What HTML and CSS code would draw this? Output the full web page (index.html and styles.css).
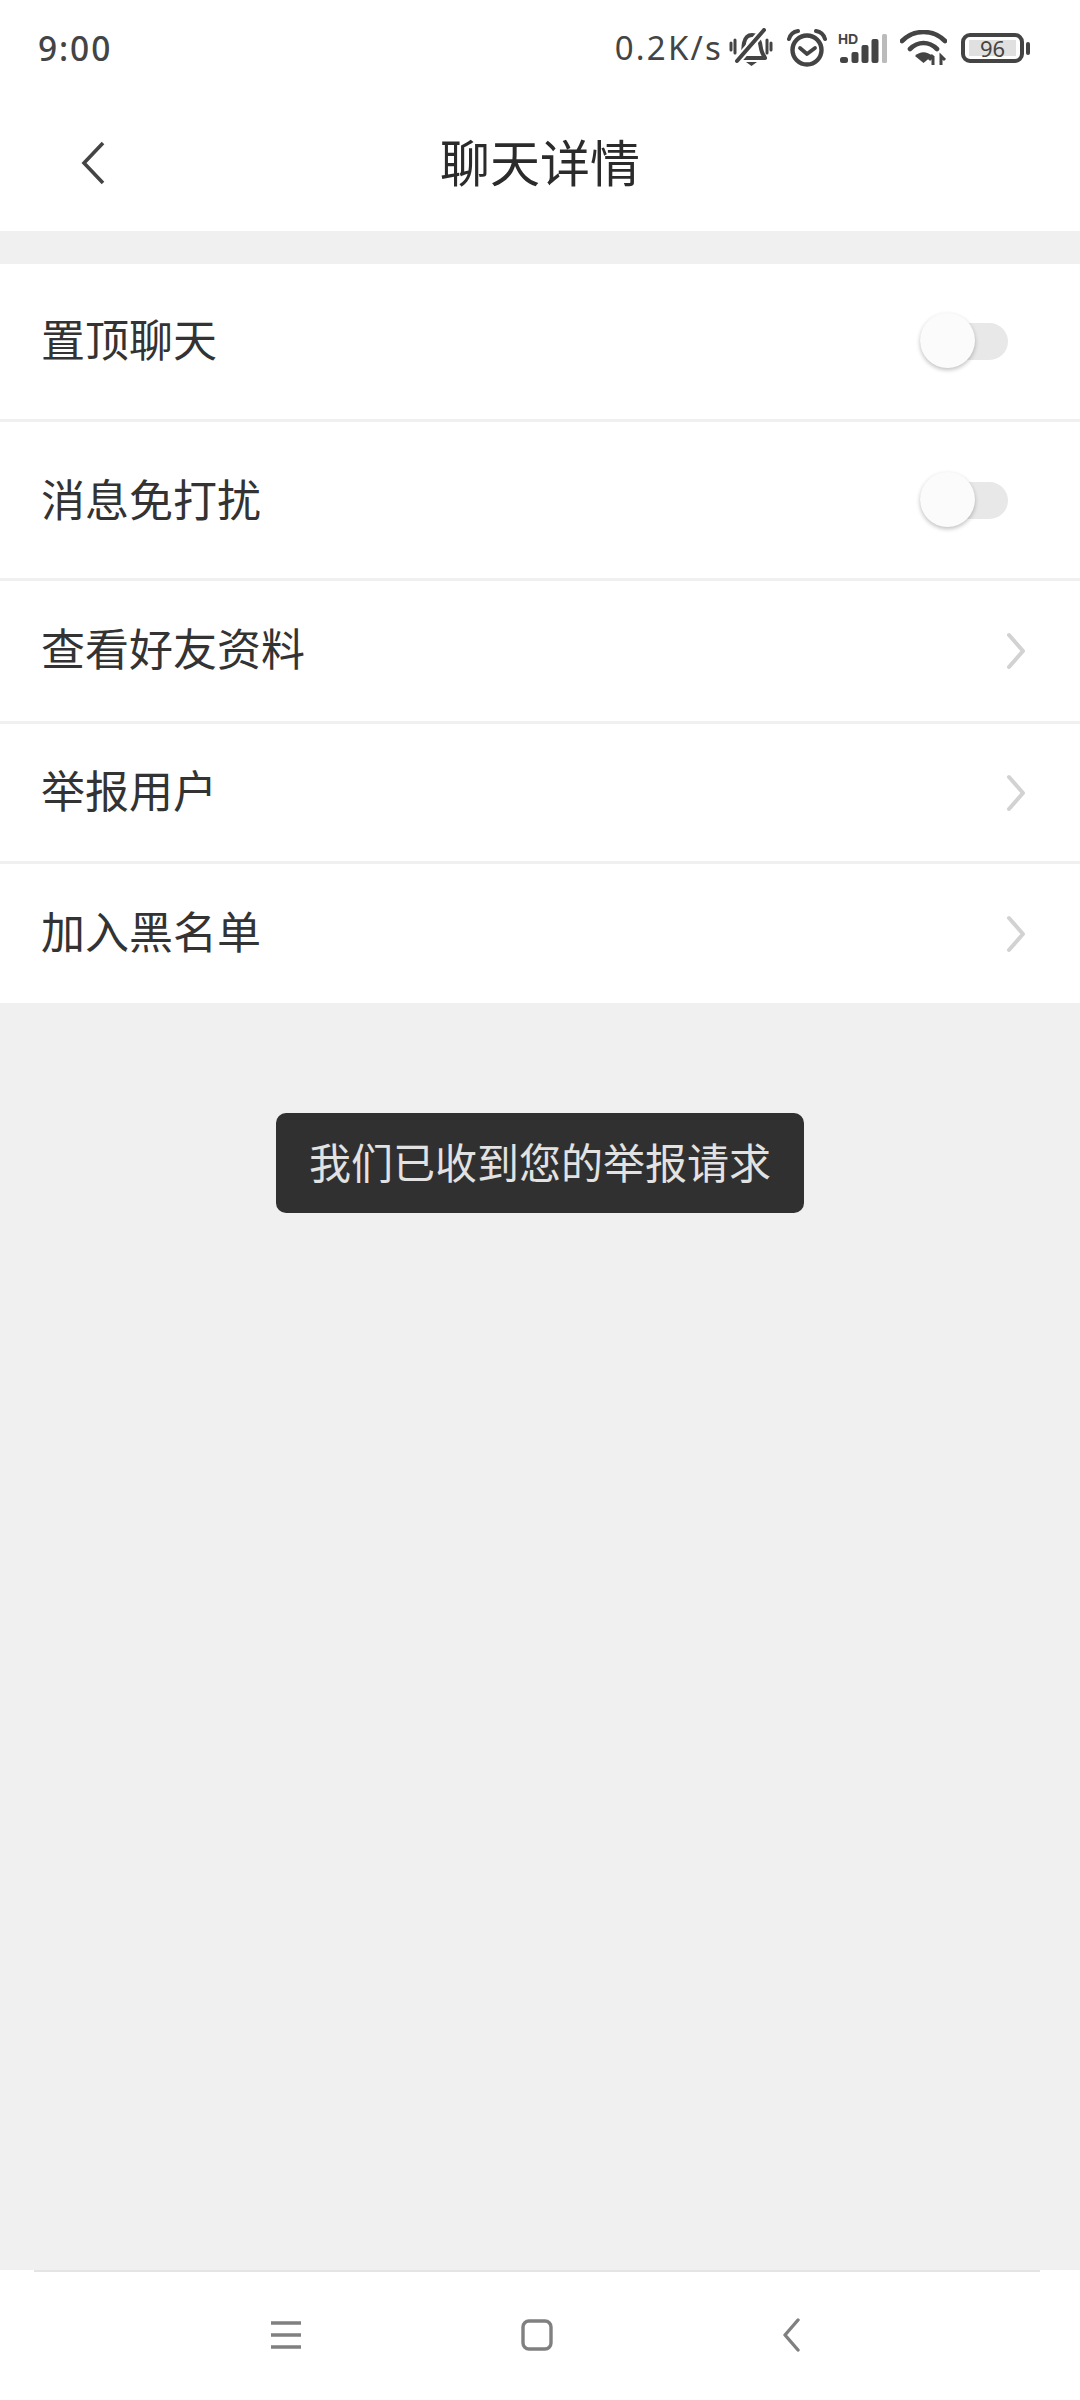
FILE: index.html
```html
<!DOCTYPE html>
<html lang="zh-CN">
<head>
<meta charset="utf-8">
<title>聊天详情</title>
<link rel="stylesheet" href="styles.css">
</head>
<body>
<div class="screen">
  <header class="top">
    <div class="status">
      <span class="time">9:00</span>
      <div class="status-right">
        <span class="speed">0.2K/s</span>
        <svg class="ic-bell" width="44" height="40" viewBox="0 0 44 40">
          <path d="M12 28c3-3 2-8 3-13 1-5 4-8 8-8s7 3 8 8c1 5 1 9 4 13l1 2H9z" fill="none" stroke="#444" stroke-width="4" stroke-linejoin="round"/>
          <path d="M17 34h11l-5.500 4z" fill="#444"/>
          <path d="M35 2 8 33" stroke="#fff" stroke-width="8"/>
          <path d="M35 2 8 33" stroke="#444" stroke-width="4" stroke-linecap="round"/>
          <path d="M2 15v7M6 12v13M38 12v13M42 15v7" stroke="#444" stroke-width="3" stroke-linecap="round"/>
        </svg>
        <svg class="ic-alarm" width="40" height="38" viewBox="0 0 40 38">
          <circle cx="20" cy="21" r="14.500" fill="none" stroke="#444" stroke-width="4.400"/>
          <path d="M13 19l7 6 8-6" fill="none" stroke="#444" stroke-width="3.800" stroke-linecap="round" stroke-linejoin="round"/>
          <path d="M2 10Q4 3 11 2M38 10Q36 3 29 2" fill="none" stroke="#444" stroke-width="4" stroke-linecap="round"/>
        </svg>
        <div class="signal">
          <span class="hd">HD</span>
          <svg width="50" height="32" viewBox="0 0 50 32">
            <rect x="2" y="25" width="8" height="6" rx="2.500" fill="#444"/>
            <rect x="13.500" y="20" width="7" height="11" rx="2" fill="#444"/>
            <rect x="23.500" y="13" width="7" height="18" rx="2" fill="#444"/>
            <rect x="33.500" y="7" width="7" height="24" rx="2" fill="#444"/>
            <rect x="44" y="2" width="5" height="29" rx="1.500" fill="#bbb"/>
          </svg>
        </div>
        <svg class="ic-wifi" width="47" height="36" viewBox="0 0 47 36">
          <path d="M2 11C14 -1 33 -1 45 11M10 19C18 11 29 11 37 19" fill="none" stroke="#444" stroke-width="4.600" stroke-linecap="round"/>
          <path d="M15 26c5-5 12-5 17 0l-8.500 7z" fill="#444"/>
          <path d="M33 26v9M29 30l4-5M41 35v-9l4 4" fill="none" stroke="#444" stroke-width="3"/>
        </svg>
        <div class="battery">
          <div class="battery-body"><span class="battery-fill">96</span></div>
          <span class="battery-nub"></span>
        </div>
      </div>
    </div>
    <div class="titlebar">
      <svg class="back" width="24" height="44" viewBox="0 0 24 44">
        <path d="M22 2 3 22l19 20" fill="none" stroke="#444" stroke-width="3.600"/>
      </svg>
      <h1 class="title">聊天详情</h1>
    </div>
  </header>

  <main class="content">
    <ul class="list">
      <li class="row row-1">
        <span class="label">置顶聊天</span>
        <span class="switch"><span class="thumb"></span></span>
      </li>
      <li class="row row-2">
        <span class="label">消息免打扰</span>
        <span class="switch"><span class="thumb"></span></span>
      </li>
      <li class="row row-3">
        <span class="label">查看好友资料</span>
        <svg class="chev" width="20" height="38" viewBox="0 0 20 38"><path d="M3 3l14 16L3 35" fill="none" stroke="#d2d2d2" stroke-width="4" stroke-linecap="round" stroke-linejoin="round"/></svg>
      </li>
      <li class="row row-4">
        <span class="label">举报用户</span>
        <svg class="chev" width="20" height="38" viewBox="0 0 20 38"><path d="M3 3l14 16L3 35" fill="none" stroke="#d2d2d2" stroke-width="4" stroke-linecap="round" stroke-linejoin="round"/></svg>
      </li>
      <li class="row row-5">
        <span class="label">加入黑名单</span>
        <svg class="chev" width="20" height="38" viewBox="0 0 20 38"><path d="M3 3l14 16L3 35" fill="none" stroke="#d2d2d2" stroke-width="4" stroke-linecap="round" stroke-linejoin="round"/></svg>
      </li>
    </ul>
    <div class="toast">我们已收到您的举报请求</div>
  </main>

  <nav class="navbar">
    <span class="nav-line"></span>
    <div class="nav-icons">
      <svg width="32" height="32" viewBox="0 0 32 32"><path d="M1 4h30M1 16h30M1 28h30" stroke="#808080" stroke-width="3.400"/></svg>
      <svg width="32" height="32" viewBox="0 0 32 32"><rect x="2" y="2" width="28" height="28" rx="6" fill="none" stroke="#808080" stroke-width="3.400"/></svg>
      <svg class="nav-back" width="18" height="34" viewBox="0 0 18 34"><path d="M16 2 3 17l13 15" fill="none" stroke="#808080" stroke-width="3.400" stroke-linecap="round" stroke-linejoin="round"/></svg>
    </div>
  </nav>
</div>
</body>
</html>
```
FILE: styles.css
```css
* { box-sizing: border-box; }
html, body { margin: 0; padding: 0; }
body {
  background: #f0f0f0;
  font-family: "Noto Sans CJK SC", "Noto Sans", sans-serif;
  color: #333;
}
.screen {
  width: 1080px;
  height: 2400px;
  display: flex;
  flex-direction: column;
  overflow: hidden;
}
.top { background: #fff; height: 231px; flex: none; }
.status {
  height: 96px;
  display: flex;
  align-items: center;
  justify-content: space-between;
  padding: 0 50px 0 38px;
  color: #444;
}
.time, .speed {
  font-family: "Noto Sans", sans-serif;
  font-weight: 500;
  font-size: 33.500px;
  line-height: 40px;
  letter-spacing: 1.900px;
}
.status-right { display: flex; align-items: center; }
.speed { margin-right: 6px; font-size: 33px; letter-spacing: 2.200px; font-weight: 400; }
.ic-alarm { margin-left: 14px; }
.signal { margin-left: 11px; width: 50px; height: 32px; position: relative; }
.signal svg { display: block; }
.hd {
  position: absolute;
  left: 0;
  top: 0;
  font: 700 14px/14px "Liberation Sans", sans-serif;
  color: #444;
}
.ic-wifi { margin-left: 12px; }
.battery { display: flex; align-items: center; margin-left: 14px; }
.battery-body {
  width: 63px;
  height: 30px;
  border: 4px solid #444;
  border-radius: 9px;
  padding: 3px 4px;
  display: flex;
}
.battery-fill {
  flex: 1;
  background: #e0e0e0;
  color: #444;
  font: 400 22px/16px "Noto Sans", sans-serif;
  text-align: center;
}
.battery-nub {
  width: 4px;
  height: 13px;
  margin-left: 2px;
  background: #444;
  border-radius: 2px;
}
.titlebar {
  height: 135px;
  display: flex;
  align-items: center;
  justify-content: center;
  position: relative;
}
.back { position: absolute; left: 81px; top: 45px; }
.title {
  margin: 0;
  padding-bottom: 7px;
  font-size: 50px;
  font-weight: 400;
  line-height: 60px;
  color: #2b2b2b;
}
.content {
  flex: 1;
  padding-top: 33px;
  position: relative;
}
.list { list-style: none; margin: 0; padding: 0; background: #fff; }
.row {
  display: flex;
  align-items: center;
  justify-content: space-between;
  padding: 0 54px 0 41px;
  border-bottom: 3px solid #f0f0f0;
}
.row-1 { height: 158px; }
.row-2 { height: 159px; }
.row-3 { height: 143px; }
.row-4 { height: 140px; }
.row-5 { height: 139px; border-bottom: 0; }
.label { font-size: 44px; line-height: 60px; padding-bottom: 8px; color: #333; }
.row-2 .label { padding-bottom: 5px; }
.switch {
  width: 88px;
  height: 37px;
  margin-right: 18px;
  background: #e8e8e8;
  border-radius: 19px;
  position: relative;
  display: block;
}
.thumb {
  position: absolute;
  left: 0;
  top: -10px;
  width: 55px;
  height: 55px;
  border-radius: 50%;
  background: #fbfbfb;
  box-shadow: 0 2px 4px rgba(0, 0, 0, 0.25);
}
.toast {
  position: absolute;
  top: 882px;
  left: 276px;
  width: 528px;
  height: 100px;
  background: #303030;
  border-radius: 10px;
  color: #e2e2e2;
  font-size: 42px;
  line-height: 96px;
  text-align: center;
}
.navbar {
  flex: none;
  height: 130px;
  background: #fff;
  position: relative;
}
.nav-line {
  position: absolute;
  left: 34px;
  right: 40px;
  top: 0;
  height: 2px;
  background: #e4e4e4;
}
.nav-icons {
  display: flex;
  align-items: center;
  padding: 48px 0 0 270px;
  gap: 219px;
}
.nav-icons svg { display: block; flex: none; }
.nav-icons .nav-back { margin-left: 10px; }
```
